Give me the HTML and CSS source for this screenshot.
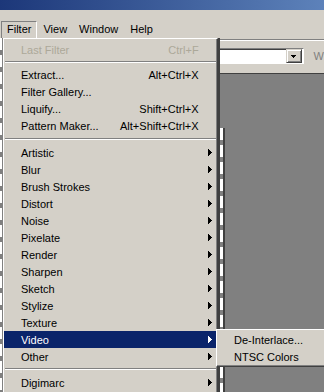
FILE: index.html
```html
<!DOCTYPE html>
<html lang="en">

<head>
    <meta charset="UTF-8">
    <meta name="viewport" content="width=device-width, initial-scale=1.0">
    <title>Filter menu</title>
    <link rel="stylesheet" href="styles.css">
</head>

<body>
    <div class="titlebar"></div>

    <div class="menubar">
        <span class="mb-item active">Filter</span>
        <span class="mb-item">View</span>
        <span class="mb-item">Window</span>
        <span class="mb-item">Help</span>
    </div>

    <div class="stage">
        <div class="edge-left"></div>

        <!-- Menu desplegable de Filter -->
        <div class="menu">
            <div class="item disabled"><span class="label">Last Filter</span><span class="key">Ctrl+F</span></div>
            <div class="sep first"></div>
            <div class="item"><span class="label">Extract...</span><span class="key">Alt+Ctrl+X</span></div>
            <div class="item"><span class="label">Filter Gallery...</span></div>
            <div class="item"><span class="label">Liquify...</span><span class="key">Shift+Ctrl+X</span></div>
            <div class="item"><span class="label">Pattern Maker...</span><span class="key">Alt+Shift+Ctrl+X</span></div>
            <div class="sep wide"></div>
            <div class="item sub"><span class="label">Artistic</span><svg class="arrow" width="4" height="7"><path d="M0 0h1v7h-1z M1 1h1v5h-1z M2 2h1v3h-1z M3 3h1v1h-1z"/></svg></div>
            <div class="item sub"><span class="label">Blur</span><svg class="arrow" width="4" height="7"><path d="M0 0h1v7h-1z M1 1h1v5h-1z M2 2h1v3h-1z M3 3h1v1h-1z"/></svg></div>
            <div class="item sub"><span class="label">Brush Strokes</span><svg class="arrow" width="4" height="7"><path d="M0 0h1v7h-1z M1 1h1v5h-1z M2 2h1v3h-1z M3 3h1v1h-1z"/></svg></div>
            <div class="item sub"><span class="label">Distort</span><svg class="arrow" width="4" height="7"><path d="M0 0h1v7h-1z M1 1h1v5h-1z M2 2h1v3h-1z M3 3h1v1h-1z"/></svg></div>
            <div class="item sub"><span class="label">Noise</span><svg class="arrow" width="4" height="7"><path d="M0 0h1v7h-1z M1 1h1v5h-1z M2 2h1v3h-1z M3 3h1v1h-1z"/></svg></div>
            <div class="item sub"><span class="label">Pixelate</span><svg class="arrow" width="4" height="7"><path d="M0 0h1v7h-1z M1 1h1v5h-1z M2 2h1v3h-1z M3 3h1v1h-1z"/></svg></div>
            <div class="item sub"><span class="label">Render</span><svg class="arrow" width="4" height="7"><path d="M0 0h1v7h-1z M1 1h1v5h-1z M2 2h1v3h-1z M3 3h1v1h-1z"/></svg></div>
            <div class="item sub"><span class="label">Sharpen</span><svg class="arrow" width="4" height="7"><path d="M0 0h1v7h-1z M1 1h1v5h-1z M2 2h1v3h-1z M3 3h1v1h-1z"/></svg></div>
            <div class="item sub"><span class="label">Sketch</span><svg class="arrow" width="4" height="7"><path d="M0 0h1v7h-1z M1 1h1v5h-1z M2 2h1v3h-1z M3 3h1v1h-1z"/></svg></div>
            <div class="item sub"><span class="label">Stylize</span><svg class="arrow" width="4" height="7"><path d="M0 0h1v7h-1z M1 1h1v5h-1z M2 2h1v3h-1z M3 3h1v1h-1z"/></svg></div>
            <div class="item sub"><span class="label">Texture</span><svg class="arrow" width="4" height="7"><path d="M0 0h1v7h-1z M1 1h1v5h-1z M2 2h1v3h-1z M3 3h1v1h-1z"/></svg></div>
            <div class="item sub selected"><span class="label">Video</span><svg class="arrow" width="4" height="7"><path d="M0 0h1v7h-1z M1 1h1v5h-1z M2 2h1v3h-1z M3 3h1v1h-1z"/></svg></div>
            <div class="item sub"><span class="label">Other</span><svg class="arrow" width="4" height="7"><path d="M0 0h1v7h-1z M1 1h1v5h-1z M2 2h1v3h-1z M3 3h1v1h-1z"/></svg></div>
            <div class="sep"></div>
            <div class="item sub"><span class="label">Digimarc</span><svg class="arrow" width="4" height="7"><path d="M0 0h1v7h-1z M1 1h1v5h-1z M2 2h1v3h-1z M3 3h1v1h-1z"/></svg></div>
        </div>

        <!-- Ventana de la aplicacion detras del menu -->
        <div class="app">
            <div class="options">
                <div class="combo">
                    <div class="combo-field"></div>
                    <div class="combo-btn">
                        <svg width="5" height="3"><path d="M0 0h5v1h-5z M1 1h3v1h-3z M2 2h1v1h-1z"/></svg>
                    </div>
                </div>
                <span class="opt-label">W</span>
            </div>
            <div class="workspace">
                <div class="palette-edge"></div>
            </div>
        </div>

        <!-- Submenu de Video -->
        <div class="submenu">
            <div class="item"><span class="label">De-Interlace...</span></div>
            <div class="item"><span class="label">NTSC Colors</span></div>
        </div>
    </div>
</body>

</html>
```

FILE: styles.css
```css
* {
    box-sizing: border-box;
    margin: 0;
    padding: 0;
}

html, body {
    width: 324px;
    height: 392px;
    overflow: hidden;
}

body {
    background-color: #d4d0c8;
    font-family: "Liberation Sans", Arial, sans-serif;
    font-size: 11px;
    color: #000;
}

.titlebar {
    height: 10px;
    background: linear-gradient(to right, #1c3779, #5d82ba);
}

.menubar {
    height: 28px;
    display: flex;
    align-items: flex-end;
    padding-left: 1px;
}

.mb-item {
    height: 17px;
    line-height: 15px;
    padding: 0 5px;
    border: 1px solid transparent;
    border-bottom: none;
}

.mb-item.active {
    border-color: #808080 #fff #fff #808080;
}

.stage {
    position: relative;
    display: flex;
    height: 354px;
}

.edge-left {
    width: 3px;
    background:
        linear-gradient(to right, transparent 2px, #808080 2px),
        repeating-linear-gradient(to bottom, #fff 0 12px, #808080 12px 17px);
}

/* Menu */
.menu {
    width: 216px;
    padding: 2px 1px 0 0;
    border-top: 1px solid #fff;
    border-left: 1px solid #fff;
    border-right: 1px solid #404040;
    box-shadow: inset -1px 0 #808080;
    background-color: #d4d0c8;
}

.item {
    display: flex;
    align-items: center;
    height: 17px;
    padding: 0 4px 0 17px;
    white-space: nowrap;
}

.item .label {
    flex: 1;
}

.item .key {
    margin-right: 13px;
}

.item.disabled {
    color: #aca899;
}

.item.selected {
    background-color: #0a246a;
    color: #fff;
}

.arrow {
    fill: currentColor;
    display: block;
}

.sep {
    height: 9px;
    margin-left: 1px;
    background: linear-gradient(to bottom, transparent 3px, #808080 3px 4px, #fff 4px 5px, transparent 5px);
}

.sep.first {
    height: 8px;
}

.sep.wide {
    height: 10px;
    background: linear-gradient(to bottom, transparent 4px, #808080 4px 5px, #fff 5px 6px, transparent 6px);
}

/* Aplicacion de fondo */
.app {
    flex: 1;
    display: flex;
    flex-direction: column;
    border-left: 2px solid #404040;
}

.options {
    height: 36px;
    display: flex;
    align-items: flex-start;
    padding-top: 10px;
    border-bottom: 1px solid #404040;
    background: linear-gradient(to bottom, #d4d0c8 1px, #808080 1px 2px, #fff 2px 3px, #d4d0c8 3px);
}

.combo {
    display: flex;
    width: 84px;
    height: 16px;
    padding: 0 1px 0 0;
    background-color: #fff;
    border-top: 1px solid #808080;
    border-right: 1px solid #fff;
    border-bottom: 1px solid #fff;
}

.combo-field {
    flex: 1;
    background-color: #fff;
    border-top: 1px solid #404040;
}

.combo-btn {
    width: 16px;
    display: flex;
    align-items: center;
    justify-content: center;
    background-color: #d4d0c8;
    border: 1px solid;
    border-color: #d4d0c8 #404040 #404040 #d4d0c8;
    box-shadow: inset 1px 1px #fff, inset -1px -1px #808080;
}

.combo-btn svg {
    fill: #000;
    display: block;
}

.opt-label {
    margin-left: 10px;
    line-height: 16px;
    color: #808080;
}

.workspace {
    flex: 1;
    display: flex;
    background-color: #808080;
}

.palette-edge {
    width: 5px;
    margin-top: 54px;
    border-right: 2px solid #404040;
    background: repeating-linear-gradient(to bottom, #fff 0 12px, #808080 12px 17px);
}

/* Submenu */
.submenu {
    position: absolute;
    left: 216px;
    top: 291px;
    width: 120px;
    padding: 1px 0;
    background-color: #d4d0c8;
    border: 1px solid;
    border-color: #fff #404040 #404040 #fff;
    box-shadow: inset 0 -1px #808080;
}

.submenu .item {
    padding-left: 17px;
}
```
